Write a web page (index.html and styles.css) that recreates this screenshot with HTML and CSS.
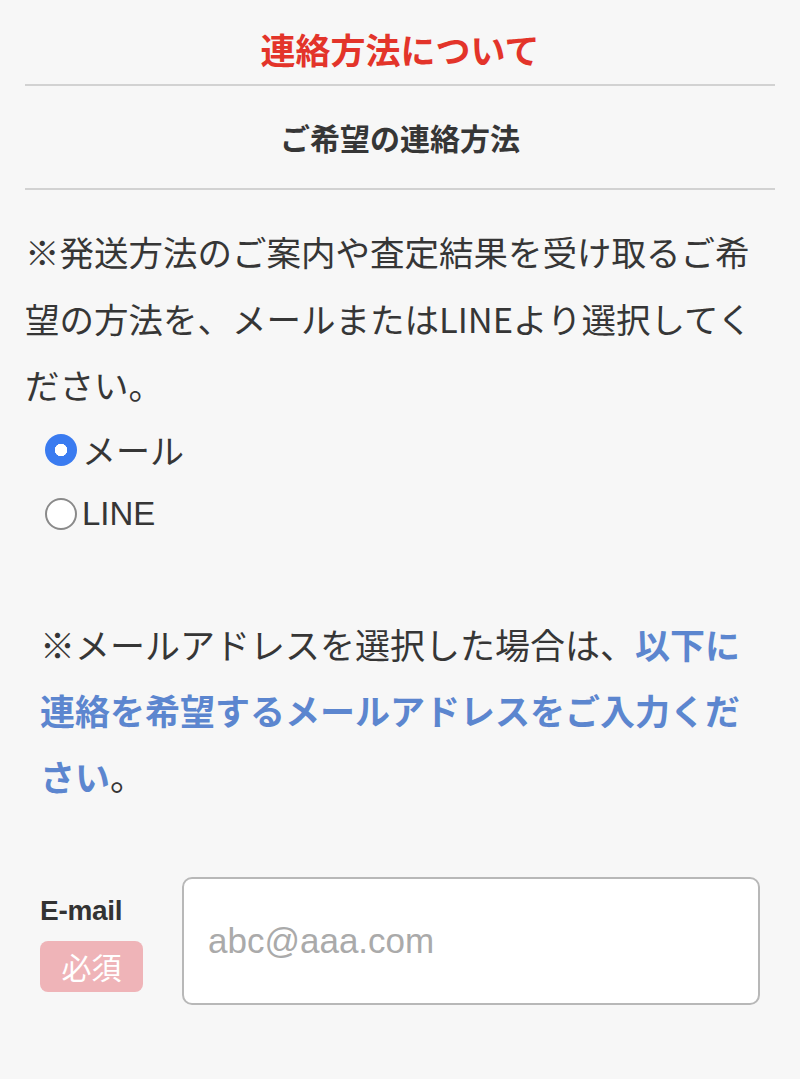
FILE: index.html
```html
<!DOCTYPE html>
<html lang="ja">
<head>
<meta charset="utf-8">
<title>連絡方法について</title>
<link rel="stylesheet" href="styles.css">
</head>
<body>
<div class="wrap">
  <h2 class="title">連絡方法について</h2>
  <h3 class="subtitle">ご希望の連絡方法</h3>
  <p class="note">※発送方法のご案内や査定結果を受け取るご希望の方法を、メールまたはLINEより選択してください。</p>
  <div class="radios">
    <label class="radio"><span class="dot checked"></span><span class="rlabel">メール</span></label>
    <label class="radio"><span class="dot"></span><span class="rlabel latin">LINE</span></label>
  </div>
  <p class="note2">※メールアドレスを選択した場合は、<strong class="hl">以下に連絡を希望するメールアドレスをご入力ください</strong>。</p>
  <div class="field">
    <div class="flabel">
      <span class="fname">E-mail</span>
      <span class="badge">必須</span>
    </div>
    <div class="input"><span class="ph">abc@aaa.com</span></div>
  </div>
</div>
</body>
</html>
```
FILE: styles.css
```css
html, body {
  margin: 0;
  padding: 0;
  background: #f7f7f7;
}
body {
  font-family: "Noto Sans CJK JP", "Noto Sans", sans-serif;
  color: #363636;
}
.wrap {
  padding: 0 25px;
}
.title {
  margin: 0;
  padding-top: 14px;
  height: 70px;
  line-height: 70px;
  text-align: center;
  font-size: 35px;
  font-weight: 700;
  color: #e3342a;
  border-bottom: 2px solid #d2d2d2;
  box-sizing: content-box;
}
.subtitle {
  margin: 0;
  height: 102px;
  line-height: 102px;
  text-align: center;
  font-size: 30px;
  font-weight: 700;
  color: #363636;
  border-bottom: 2px solid #d2d2d2;
}
.note {
  margin: 28px 0 0;
  width: 740px;
  font-size: 34.5px;
  line-height: 66.5px;
}
.radios {
  padding-left: 20px;
  display: flex;
  flex-direction: column;
}
.radio {
  display: flex;
  align-items: center;
  height: 64px;
  gap: 5px;
}
.dot {
  width: 28px;
  height: 28px;
  border: 2px solid #8a8a8a;
  border-radius: 50%;
  background: #fff;
  flex: none;
}
.dot.checked {
  width: 32px;
  height: 32px;
  border: none;
  background: radial-gradient(circle, #fff 0 6px, #3a7bf0 6.5px);
}
.rlabel {
  font-size: 34px;
  line-height: 64px;
}
.rlabel.latin {
  font-family: "Liberation Sans", "Noto Sans CJK JP", sans-serif;
  font-size: 33px;
}
.note2 {
  margin: 65px 0 0;
  padding-left: 15px;
  width: 720px;
  font-size: 35px;
  line-height: 66px;
}
.hl {
  color: #5c86cf;
  font-weight: 700;
}
.field {
  margin-top: 68px;
  padding-left: 15px;
  display: flex;
  align-items: flex-start;
  gap: 39px;
}
.flabel {
  width: 103px;
  padding-top: 16px;
  display: flex;
  flex-direction: column;
  align-items: flex-start;
}
.fname {
  font-family: "Liberation Sans", sans-serif;
  font-weight: 700;
  font-size: 28px;
  line-height: 36px;
  letter-spacing: -0.3px;
  color: #333;
}
.badge {
  margin-top: 12px;
  width: 103px;
  height: 51px;
  border-radius: 8px;
  background: #efb4b8;
  color: #fff;
  font-size: 30px;
  line-height: 51px;
  text-align: center;
}
.input {
  width: 550px;
  height: 124px;
  background: #fff;
  border: 2px solid #b8b8b8;
  border-radius: 10px;
  display: flex;
  align-items: center;
  padding-left: 24px;
  box-sizing: content-box;
}
.ph {
  font-family: "Liberation Sans", sans-serif;
  font-size: 35px;
  color: #aaaaaa;
}
```
